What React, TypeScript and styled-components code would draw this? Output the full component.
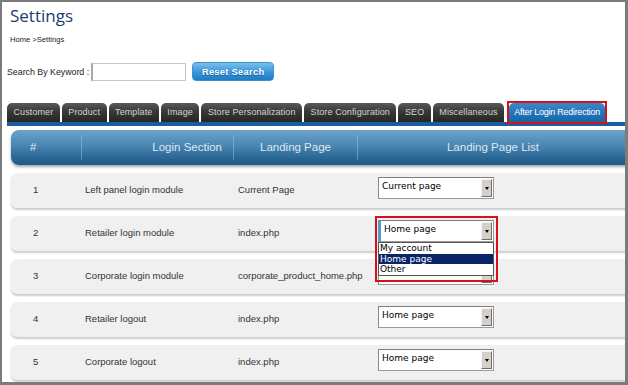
import React from "react";
import styled, { createGlobalStyle } from "styled-components";

const Global = createGlobalStyle`
  html, body { margin: 0; padding: 0; background: #fff; }
  body { font-family: "Liberation Sans", Arial, sans-serif; }
`;

const Frame = styled.div`
  width: 628px;
  height: 385px;
  box-sizing: border-box;
  border: 2px solid #7b7b7b;
  border-right-width: 3px;
  border-bottom-width: 3px;
  overflow: hidden;
  background: #fff;
  padding-left: 5px;
  display: flex;
  flex-direction: column;
`;

const Title = styled.h1`
  margin: 2px 0 0 3px;
  font-family: "Open Sans", sans-serif;
  font-weight: 400;
  font-size: 17px;
  line-height: 24px;
  color: #1d3c6e;
`;

const Crumb = styled.div`
  margin: 7px 0 0 3px;
  font-size: 7.6px;
  line-height: 10px;
  color: #222;
`;

const SearchRow = styled.div`
  margin-top: 17px;
  display: flex;
  align-items: center;
  height: 19px;
`;

const SearchLabel = styled.span`
  font-size: 8.8px;
  color: #222;
  margin-right: 2px;
`;

const SearchInput = styled.div`
  width: 95px;
  height: 18px;
  box-sizing: border-box;
  border: 1px solid #c4c4c4;
  border-left: 2px solid #a8a8a8;
  background: #fff;
`;

const ResetButton = styled.button`
  margin-left: 6px;
  width: 82px;
  height: 19px;
  border: 1px solid #3d8fcf;
  border-radius: 4px;
  background: linear-gradient(#78c0ee, #3b98dc 50%, #1d7cc6);
  color: #fff;
  font-family: "Liberation Sans", Arial, sans-serif;
  font-weight: 700;
  font-size: 9.3px;
  letter-spacing: 0.3px;
  text-shadow: 0 1px 1px rgba(0, 40, 90, 0.5);
  padding: 0;
`;

const TabBar = styled.div`
  margin-top: 20px;
  display: flex;
  align-items: flex-end;
  gap: 2px;
  border-bottom: 4px solid #1b5e9c;
`;

const Tab = styled.div<{ $active?: boolean }>`
  height: 19px;
  line-height: 19px;
  padding: ${(p) => (p.$active ? "0 5px" : "0 6.5px")};
  border-radius: 5px 5px 0 0;
  font-size: 9px;
  white-space: nowrap;
  color: ${(p) => (p.$active ? "#fff" : "#d2d2d2")};
  background: ${(p) =>
    p.$active
      ? "linear-gradient(#3b88c8, #1565a8)"
      : "linear-gradient(#5a5a5a, #383838 45%, #262626)"};
  letter-spacing: ${(p) => (p.$active ? "-0.25px" : "0.1px")};
`;

const ActiveMark = styled.div`
  margin-left: 1px;
  margin-bottom: -2px;
  border: 2px solid #d3121d;
  display: flex;
`;

const Table = styled.div`
  margin: 4px 0 0 4px;
  width: 617px;
  display: flex;
  flex-direction: column;
  gap: 8px;
`;

const cols = "70px 152px 124px 1fr";

const HeadRow = styled.div`
  display: grid;
  grid-template-columns: ${cols};
  align-items: center;
  height: 35px;
  border-radius: 8px 0 0 8px;
  background: linear-gradient(#6ea3c8, #4a86b2 45%, #25628f 85%, #1e5a86);
  box-shadow: 0 2px 3px rgba(0, 0, 0, 0.35);
  color: #dde8f1;
  font-size: 11.5px;
`;

const HeadCell = styled.div<{ $align: string; $pad?: string; $divider?: boolean }>`
  height: 25px;
  line-height: 25px;
  text-align: ${(p) => p.$align};
  padding: ${(p) => p.$pad || "0"};
  border-left: ${(p) => (p.$divider ? "1px solid rgba(170, 205, 230, 0.45)" : "none")};
  white-space: nowrap;
`;

const Row = styled.div`
  display: grid;
  grid-template-columns: ${cols};
  align-items: center;
  height: 35px;
  border-radius: 6px 0 0 6px;
  background: #f0f0f0;
  box-shadow: 0 2px 2px rgba(0, 0, 0, 0.2);
  color: #333;
  font-size: 9.5px;
`;

const Cell = styled.div<{ $pad: string }>`
  padding-left: ${(p) => p.$pad};
  white-space: nowrap;
  margin-top: -3px;
`;

const SelectWrap = styled.div`
  position: relative;
  margin-left: 21px;
  width: 116px;
  align-self: start;
  margin-top: 4px;
`;

const SelectBox = styled.div<{ $focus?: boolean }>`
  height: 22px;
  box-sizing: border-box;
  display: flex;
  align-items: stretch;
  border: 1px solid #9a9a9a;
  border-top-color: #7f7f7f;
  border-left: ${(p) => (p.$focus ? "3px solid #4f9bd1" : "1px solid #8a8a8a")};
  background: #fff;
  padding: 1px 1px 1px 0;
`;

const SelectText = styled.div`
  flex: 1;
  font-family: "DejaVu Sans", Verdana, sans-serif;
  font-size: 9px;
  color: #000;
  padding: 2px 0 0 3px;
  line-height: 11px;
`;

const ArrowBtn = styled.div`
  width: 11px;
  box-sizing: border-box;
  background: #d4d0c8;
  border: 1px solid;
  border-color: #f4f4f4 #6e6e6e #6e6e6e #f4f4f4;
  display: flex;
  align-items: center;
  justify-content: center;
`;

const Tri = styled.div`
  width: 0;
  height: 0;
  border-left: 2.5px solid transparent;
  border-right: 2.5px solid transparent;
  border-top: 3px solid #000;
`;

const DropList = styled.div`
  position: absolute;
  top: 22px;
  left: 0;
  width: 116px;
  box-sizing: border-box;
  border: 1px solid #555;
  background: #fff;
  z-index: 2;
  font-family: "DejaVu Sans", Verdana, sans-serif;
  font-size: 9px;
`;

const Option = styled.div<{ $sel?: boolean }>`
  height: 10.5px;
  line-height: 10.5px;
  padding-left: 1px;
  color: ${(p) => (p.$sel ? "#fff" : "#000")};
  background: ${(p) => (p.$sel ? "#0a246a" : "transparent")};
`;

const Callout = styled.div`
  position: absolute;
  top: -4px;
  left: -3px;
  width: 123px;
  height: 66px;
  box-sizing: border-box;
  border: 2px solid #d3121d;
  z-index: 3;
  pointer-events: none;
`;

type Item = { n: number; section: string; page: string; value: string; open?: boolean };

const rows: Item[] = [
  { n: 1, section: "Left panel login module", page: "Current Page", value: "Current page" },
  { n: 2, section: "Retailer login module", page: "index.php", value: "Home page", open: true },
  { n: 3, section: "Corporate login module", page: "corporate_product_home.php", value: "" },
  { n: 4, section: "Retailer logout", page: "index.php", value: "Home page" },
  { n: 5, section: "Corporate logout", page: "index.php", value: "Home page" },
];

const tabs = [
  "Customer",
  "Product",
  "Template",
  "Image",
  "Store Personalization",
  "Store Configuration",
  "SEO",
  "Miscellaneous",
];

function Select({ value, open }: { value: string; open?: boolean }) {
  return (
    <SelectWrap>
      <SelectBox $focus={open}>
        <SelectText>{value}</SelectText>
        <ArrowBtn>
          <Tri />
        </ArrowBtn>
      </SelectBox>
      {open && (
        <>
          <DropList>
            <Option>My account</Option>
            <Option $sel>Home page</Option>
            <Option>Other</Option>
          </DropList>
          <Callout />
        </>
      )}
    </SelectWrap>
  );
}

export default function App() {
  return (
    <>
      <Global />
      <Frame>
        <Title>Settings</Title>
        <Crumb>Home &gt;Settings</Crumb>
        <SearchRow>
          <SearchLabel>Search By Keyword :</SearchLabel>
          <SearchInput />
          <ResetButton>Reset Search</ResetButton>
        </SearchRow>
        <TabBar>
          {tabs.map((t) => (
            <Tab key={t}>{t}</Tab>
          ))}
          <ActiveMark>
            <Tab $active>After Login Redirection</Tab>
          </ActiveMark>
        </TabBar>
        <Table>
          <HeadRow>
            <HeadCell $align="left" $pad="0 0 0 19px">#</HeadCell>
            <HeadCell $align="right" $pad="0 11px 0 0" $divider>Login Section</HeadCell>
            <HeadCell $align="center" $divider>Landing Page</HeadCell>
            <HeadCell $align="center" $divider>Landing Page List</HeadCell>
          </HeadRow>
          {rows.map((r) => (
            <Row key={r.n}>
              <Cell $pad="22px">{r.n}</Cell>
              <Cell $pad="4px">{r.section}</Cell>
              <Cell $pad="5px">{r.page}</Cell>
              <Select value={r.value} open={r.open} />
            </Row>
          ))}
        </Table>
      </Frame>
    </>
  );
}
